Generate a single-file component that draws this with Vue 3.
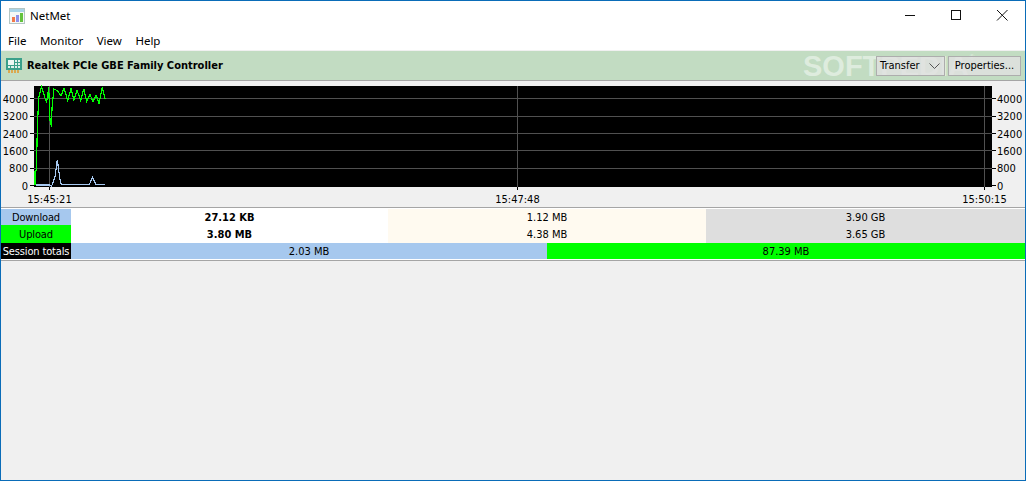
<script setup>
const green = "35,185 35,171 36.5,170 37,142 38,113 38.7,98 41.5,87 45,98 46.7,102 48.7,87.5 50,120 51.5,127 52,108 54,89 57.3,90.7 61,96 64,88 67.7,100.7 71,88.7 74,100 77,90 80.7,100.7 83.7,88.7 86.7,101 90,94.7 93,101.7 96,95 99,103.3 102.3,87.3 105.3,99.3"
const blue = "36,185 49.3,185 51.7,186 55,176.7 57.3,160 60,180 61.3,184.7 89.3,184.7 92.3,177.3 96,184.7 105,184.7"
const ticks = [
  { y: 98.5, label: '4000' }, { y: 116, label: '3200' }, { y: 133.5, label: '2400' },
  { y: 150.5, label: '1600' }, { y: 168, label: '800' }, { y: 185.5, label: '0' },
]
const times = [{ x: 49.5, label: '15:45:21' }, { x: 517.5, label: '15:47:48' }, { x: 984.5, label: '15:50:15' }]
const menus = ['File', 'Monitor', 'View', 'Help']
</script>

<template>
  <div class="win">
    <header class="title">
      <svg class="appicon" width="16" height="16" viewBox="0 0 16 16">
        <rect x="0.5" y="0.5" width="15" height="15" fill="#f6f8f6" stroke="#b4c6c4" />
        <rect x="1" y="1" width="14" height="3" fill="#a9d4e8" />
        <rect x="3" y="9" width="3" height="5" fill="#f2794a" />
        <rect x="7" y="7" width="3" height="7" fill="#8f8fe8" />
        <rect x="11" y="5" width="3" height="9" fill="#63c23e" />
      </svg>
      <span class="apptitle">NetMet</span>
      <div class="caption">
        <svg width="46" height="30" viewBox="0 0 46 30"><path d="M17 15.500h10" stroke="#111" fill="none" /></svg>
        <svg width="46" height="30" viewBox="0 0 46 30"><rect x="17.500" y="10.500" width="9" height="9" stroke="#111" fill="none" /></svg>
        <svg width="46" height="30" viewBox="0 0 46 30"><path d="M17 10l10.500 10.500M27.500 10l-10.500 10.500" stroke="#111" fill="none" /></svg>
      </div>
    </header>
    <nav class="menu"><span v-for="m in menus" :key="m">{{ m }}</span></nav>

    <section class="band">
      <svg class="nic" width="16" height="15" viewBox="0 0 16 15">
        <rect x="0" y="0" width="16" height="12" fill="#3aa08a" />
        <rect x="2" y="2" width="6" height="5" fill="#eef8f4" />
        <rect x="9" y="2" width="2" height="2" fill="#dff2ec" /><rect x="12" y="2" width="2" height="2" fill="#dff2ec" />
        <rect x="9" y="5" width="2" height="2" fill="#dff2ec" /><rect x="12" y="5" width="2" height="2" fill="#dff2ec" />
        <rect x="2" y="8" width="2" height="2" fill="#dff2ec" /><rect x="5" y="8" width="3" height="2" fill="#dff2ec" />
        <rect x="9" y="8" width="2" height="2" fill="#dff2ec" /><rect x="12" y="8" width="2" height="2" fill="#dff2ec" />
        <rect x="2" y="12" width="2" height="3" fill="#dba84e" /><rect x="5" y="12" width="2" height="3" fill="#dba84e" />
        <rect x="8" y="12" width="2" height="3" fill="#dba84e" /><rect x="11" y="12" width="2" height="3" fill="#dba84e" />
      </svg>
      <strong class="nicname">Realtek PCIe GBE Family Controller</strong>
      <div class="controls">
        <div class="btn select">Transfer
          <svg width="11" height="6" viewBox="0 0 11 6"><path d="M0.500 0.500l5 5 5-5" stroke="#555" fill="none" /></svg>
        </div>
        <div class="btn props">Properties...</div>
      </div>
      <div class="mark">SOFTPEDIA<sup>®</sup></div>
    </section>

    <section class="chart">
      <svg width="1024" height="126" viewBox="1 81 1024 126" class="plot">
        <rect x="34" y="86" width="958" height="101" fill="#000" />
        <g stroke="#505050" shape-rendering="crispEdges">
          <line v-for="t in ticks.slice(0, 5)" :key="t.label" x1="34" x2="992" :y1="t.y" :y2="t.y" />
          <line v-for="t in times" :key="t.x" :x1="t.x" :x2="t.x" y1="86" y2="187" />
        </g>
        <g stroke="#000" shape-rendering="crispEdges">
          <template v-for="t in ticks" :key="t.label">
            <line x1="30" x2="34" :y1="t.y" :y2="t.y" />
            <line x1="992" x2="996" :y1="t.y" :y2="t.y" />
          </template>
          <line v-for="t in times" :key="t.x" :x1="t.x" :x2="t.x" y1="187" y2="190" />
        </g>
        <polyline :points="blue" fill="none" stroke="#a6c8f0" stroke-width="1.2" shape-rendering="crispEdges" />
        <polyline :points="green" fill="none" stroke="#00ff00" stroke-width="1.2" shape-rendering="crispEdges" />
        <g class="axis">
          <text v-for="t in ticks" :key="t.label" x="28" :y="t.y + 4" text-anchor="end">{{ t.label }}</text>
          <text v-for="t in ticks" :key="t.label + 'r'" x="997" :y="t.y + 4">{{ t.label }}</text>
          <text v-for="t in times" :key="t.label" :x="t.x" y="203" text-anchor="middle">{{ t.label }}</text>
        </g>
      </svg>
    </section>

    <section class="table">
      <div class="row r1">
        <div class="lab dl">Download</div>
        <div class="cell w"><b>27.12 KB</b></div>
        <div class="cell c">1.12 MB</div>
        <div class="cell g">3.90 GB</div>
      </div>
      <div class="row r2">
        <div class="lab ul">Upload</div>
        <div class="cell w"><b>3.80 MB</b></div>
        <div class="cell c">4.38 MB</div>
        <div class="cell g">3.65 GB</div>
      </div>
      <div class="row r3">
        <div class="lab st">Session totals</div>
        <div class="cell dl">2.03 MB</div>
        <div class="cell ul">87.39 MB</div>
      </div>
    </section>
  </div>
</template>

<style scoped>
.win {
  width: 1026px;
  height: 481px;
  box-sizing: border-box;
  border: 1px solid #0a6cb8;
  background: #f0f0f0;
  display: flex;
  flex-direction: column;
  overflow: hidden;
  color: #000;
  font-family: "Noto Sans", "Liberation Sans", sans-serif;
}
.title {
  height: 29px;
  background: #fff;
  display: flex;
  align-items: center;
  padding-left: 8px;
}
.appicon { margin-right: 5px; }
.apptitle { font-size: 11.5px; }
.caption { margin-left: auto; display: flex; margin-right: -1px; margin-top: -1px; }
.caption svg { display: block; }
.menu {
  height: 20px;
  background: #fff;
  display: flex;
  align-items: center;
  gap: 13.5px;
  padding-left: 7px;
  font-size: 11.5px;
}
.band {
  position: relative;
  margin-top: 1px;
  height: 30px;
  box-sizing: border-box;
  background: #c2dcc2;
  border-bottom: 1px solid #a5a5a5;
  display: flex;
  align-items: center;
  padding-left: 5px;
}
.nicname { margin-left: 5px; font: bold 11px "DejaVu Sans", sans-serif; font-stretch: condensed; }
.controls { margin-left: auto; display: flex; gap: 3px; margin-right: 4px; position: relative; z-index: 1; }
.btn {
  height: 20px;
  box-sizing: border-box;
  background: rgba(225, 225, 225, 0.82);
  border: 1px solid #adadad;
  display: flex;
  align-items: center;
  font: 11px "DejaVu Sans", sans-serif;
  font-stretch: condensed;
}
.select { width: 69px; padding-left: 3px; justify-content: space-between; padding-right: 4px; }
.props { width: 73px; justify-content: center; }
.mark {
  position: absolute;
  left: 802px;
  top: 1px;
  font: bold 29px/29px "Liberation Sans", sans-serif;
  color: rgba(255, 255, 255, 0.48);
  pointer-events: none;
  white-space: nowrap;
}
.mark sup { font-size: 8px; vertical-align: 16px; line-height: 0; font-weight: normal; }
.chart { height: 126px; }
.plot { display: block; }
.axis text { font: 11px "DejaVu Sans", sans-serif; font-stretch: condensed; fill: #000; }
.table {
  border-top: 1px solid #a5a5a5;
  border-bottom: 1px solid #a5a5a5;
  padding: 1px 0;
  font: 11px "DejaVu Sans", sans-serif;
  font-stretch: condensed;
  background: #fff;
}
.row { display: grid; }
.r1, .r2 { grid-template-columns: 70px 317px 318px 1fr; }
.r1 { height: 16px; }
.r2 { height: 18px; }
.r3 { height: 16px; grid-template-columns: 70px 476px 1fr; }
.lab, .cell { display: flex; align-items: center; justify-content: center; white-space: nowrap; }
.lab { letter-spacing: -0.15px; }
.dl { background: #a6c8ee; }
.ul { background: #00ff00; }
.st { background: #000; color: #fff; }
.w { background: #fff; }
.c { background: #fffaf0; }
.g { background: #dedede; }
.cell b { font-weight: bold; }
</style>
